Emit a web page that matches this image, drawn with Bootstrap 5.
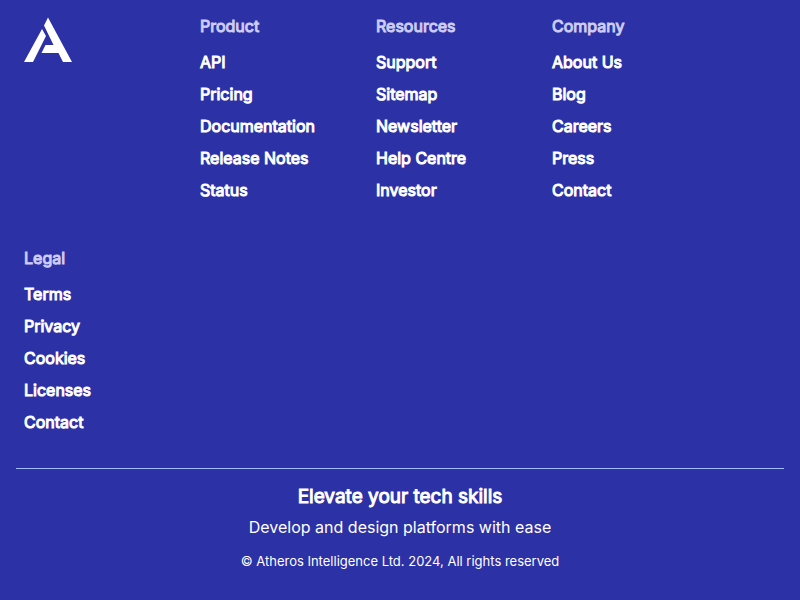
<!DOCTYPE html>
<html lang="en">
<head>
<meta charset="utf-8">
<meta name="viewport" content="width=device-width, initial-scale=1">
<title>Atheros Intelligence</title>
<link href="https://cdn.jsdelivr.net/npm/bootstrap@5.3.0/dist/css/bootstrap.min.css" rel="stylesheet">
<style>
body { background: #2d31a6; color: #fff; font-family: Inter, "Liberation Sans", sans-serif; line-height: 24px; }
.footer-grid { display: grid; grid-template-columns: repeat(auto-fill, 160px); gap: 46px 16px; padding: 0 8px 34px; }
.footer-title { font-size: 16px; font-weight: 400; line-height: 20px; color: #cdcdf7; margin-bottom: 14px; -webkit-text-stroke: 1px; }
.footer-links { display: grid; gap: 8px; }
.footer-links a { color: #fff; font-weight: 400; text-decoration: none; -webkit-text-stroke: 1px; }
.footer-links a:hover { text-decoration: underline; }
.footer-end { border-top: 1px solid #a4bcfd; }
.footer-tagline { font-size: 19px; font-weight: 400; line-height: 24px; margin-bottom: 6px; -webkit-text-stroke: 1px; }
.footer-note { margin-bottom: 12px; }
.footer-legal { font-size: 13px; line-height: 20px; }
</style>
</head>
<body>
<footer class="p-3">
<div class="footer-grid">
<a href="#" class="d-block" aria-label="Atheros home"><svg class="d-block" width="48" height="48" viewBox="0 0 48 48" fill="#fff" aria-hidden="true"><path d="M24 1.500 48 46H39L34.500 37H17.500L21.500 29H29.500L20 9.500ZM18 13 22 20 9 46H0Z"/></svg></a>
<nav aria-labelledby="t1"><h2 class="footer-title" id="t1">Product</h2><ul class="footer-links list-unstyled mb-0"><li><a href="#">API</a></li><li><a href="#">Pricing</a></li><li><a href="#">Documentation</a></li><li><a href="#">Release Notes</a></li><li><a href="#">Status</a></li></ul></nav>
<nav aria-labelledby="t2"><h2 class="footer-title" id="t2">Resources</h2><ul class="footer-links list-unstyled mb-0"><li><a href="#">Support</a></li><li><a href="#">Sitemap</a></li><li><a href="#">Newsletter</a></li><li><a href="#">Help Centre</a></li><li><a href="#">Investor</a></li></ul></nav>
<nav aria-labelledby="t3"><h2 class="footer-title" id="t3">Company</h2><ul class="footer-links list-unstyled mb-0"><li><a href="#">About Us</a></li><li><a href="#">Blog</a></li><li><a href="#">Careers</a></li><li><a href="#">Press</a></li><li><a href="#">Contact</a></li></ul></nav>
<nav aria-labelledby="t4"><h2 class="footer-title" id="t4">Legal</h2><ul class="footer-links list-unstyled mb-0"><li><a href="#">Terms</a></li><li><a href="#">Privacy</a></li><li><a href="#">Cookies</a></li><li><a href="#">Licenses</a></li><li><a href="#">Contact</a></li></ul></nav>
</div>
<div class="footer-end text-center pt-3"><h2 class="footer-tagline">Elevate your tech skills</h2><p class="footer-note">Develop and design platforms with ease</p><p class="footer-legal mb-0">© Atheros Intelligence Ltd. 2024, All rights reserved</p></div>
</footer>
<script src="https://cdn.jsdelivr.net/npm/bootstrap@5.3.0/dist/js/bootstrap.bundle.min.js"></script>
</body>
</html>
